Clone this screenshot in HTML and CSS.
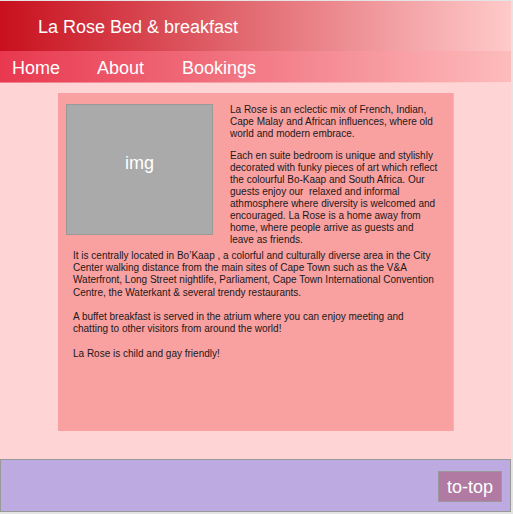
FILE: index.html
```html
<!DOCTYPE html>
<html>
<head>
<meta charset="utf-8">
<title>La Rose Bed &amp; breakfast</title>
<link rel="stylesheet" href="styles.css">
</head>
<body>
<div class="page">
  <header class="header">
    <h1 class="title">La Rose Bed &amp; breakfast</h1>
  </header>
  <nav class="nav">
    <a class="nav-link nav-home" href="#">Home</a>
    <a class="nav-link nav-about" href="#">About</a>
    <a class="nav-link" href="#">Bookings</a>
  </nav>
  <main class="main">
    <section class="content">
      <div class="top-row">
        <div class="img-box">img</div>
        <div class="side-text">
          <p class="para">La Rose is an eclectic mix of French, Indian, Cape Malay and African influences, where old world and modern embrace.</p>
          <p class="para">Each en suite bedroom is unique and stylishly decorated with funky pieces of art which reflect the colourful Bo-Kaap and South Africa. Our guests enjoy our&nbsp; relaxed and informal athmosphere where diversity is welcomed and encouraged. La Rose is a home away from home, where people arrive as guests and leave as friends.</p>
        </div>
      </div>
      <p class="bottom-text">It is centrally located in Bo’Kaap , a colorful and culturally diverse area in the City Center walking distance from the main sites of Cape Town such as the V&amp;A Waterfront, Long Street nightlife, Parliament, Cape Town International Convention Centre, the Waterkant &amp; several trendy restaurants.<br><br>A buffet breakfast is served in the atrium where you can enjoy meeting and chatting to other visitors from around the world!<br><br>La Rose is child and gay friendly!</p>
    </section>
  </main>
  <footer class="footer">
    <a class="to-top" href="#">to-top</a>
  </footer>
</div>
</body>
</html>
```

FILE: styles.css
```css
html, body {
  margin: 0;
  padding: 0;
}
body {
  background: #e4e4e4;
  font-family: "Liberation Sans", Arial, sans-serif;
}
.page {
  width: 511px;
  margin-top: 1px;
  background: #ffd4d4;
}
.header {
  box-sizing: border-box;
  height: 50px;
  padding-top: 2px;
  display: flex;
  align-items: center;
  background: linear-gradient(to right, #c8101e 0%, #e36d74 50%, #ffcaca 100%);
}
.title {
  margin: 0 0 0 38px;
  font-size: 18px;
  font-weight: normal;
  color: #fff;
  line-height: 21px;
}
.nav {
  box-sizing: border-box;
  height: 32px;
  padding-top: 3px;
  display: flex;
  align-items: center;
  background: linear-gradient(to right, #e8384f 0%, #f27a86 50%, #fdbcbc 100%);
  border-bottom: 1px solid rgba(255, 255, 255, 0.35);
}
.nav-link {
  color: #fff;
  text-decoration: none;
  font-size: 18px;
  line-height: 21px;
}
.nav-home {
  margin-left: 12px;
  margin-right: 37px;
}
.nav-about {
  margin-right: 38px;
}
.main {
  padding: 10px 0 28px 58px;
}
.content {
  box-sizing: border-box;
  width: 396px;
  height: 338px;
  background: #f9a0a0;
  padding: 11px 14px 10px 8px;
  border-right: 1px solid #fbaeae;
  color: #1a1a1a;
  font-size: 10px;
}
.top-row {
  display: flex;
  gap: 17px;
}
.img-box {
  flex: none;
  box-sizing: border-box;
  width: 147px;
  height: 131px;
  padding-bottom: 12px;
  background: #aaaaaa;
  border: 1px solid #999999;
  color: #fff;
  font-size: 18px;
  display: flex;
  align-items: center;
  justify-content: center;
}
.side-text {
  width: 212px;
}
.para {
  margin: 0 0 10px 0;
  line-height: 12px;
}
.para:last-child {
  margin-bottom: 0;
}
.bottom-text {
  margin: 4px 0 0 7px;
  line-height: 12.2px;
}
.footer {
  box-sizing: border-box;
  height: 53px;
  border: 1px solid #999;
  background: #bdaae0;
  display: flex;
  justify-content: flex-end;
  align-items: flex-start;
  padding: 11px 8px 0 0;
}
.to-top {
  box-sizing: border-box;
  height: 31px;
  padding: 5px 8px 0 8px;
  background: #b07aa2;
  border: 1px solid #999;
  color: #fff;
  text-decoration: none;
  font-size: 18px;
  line-height: 21px;
}
```
